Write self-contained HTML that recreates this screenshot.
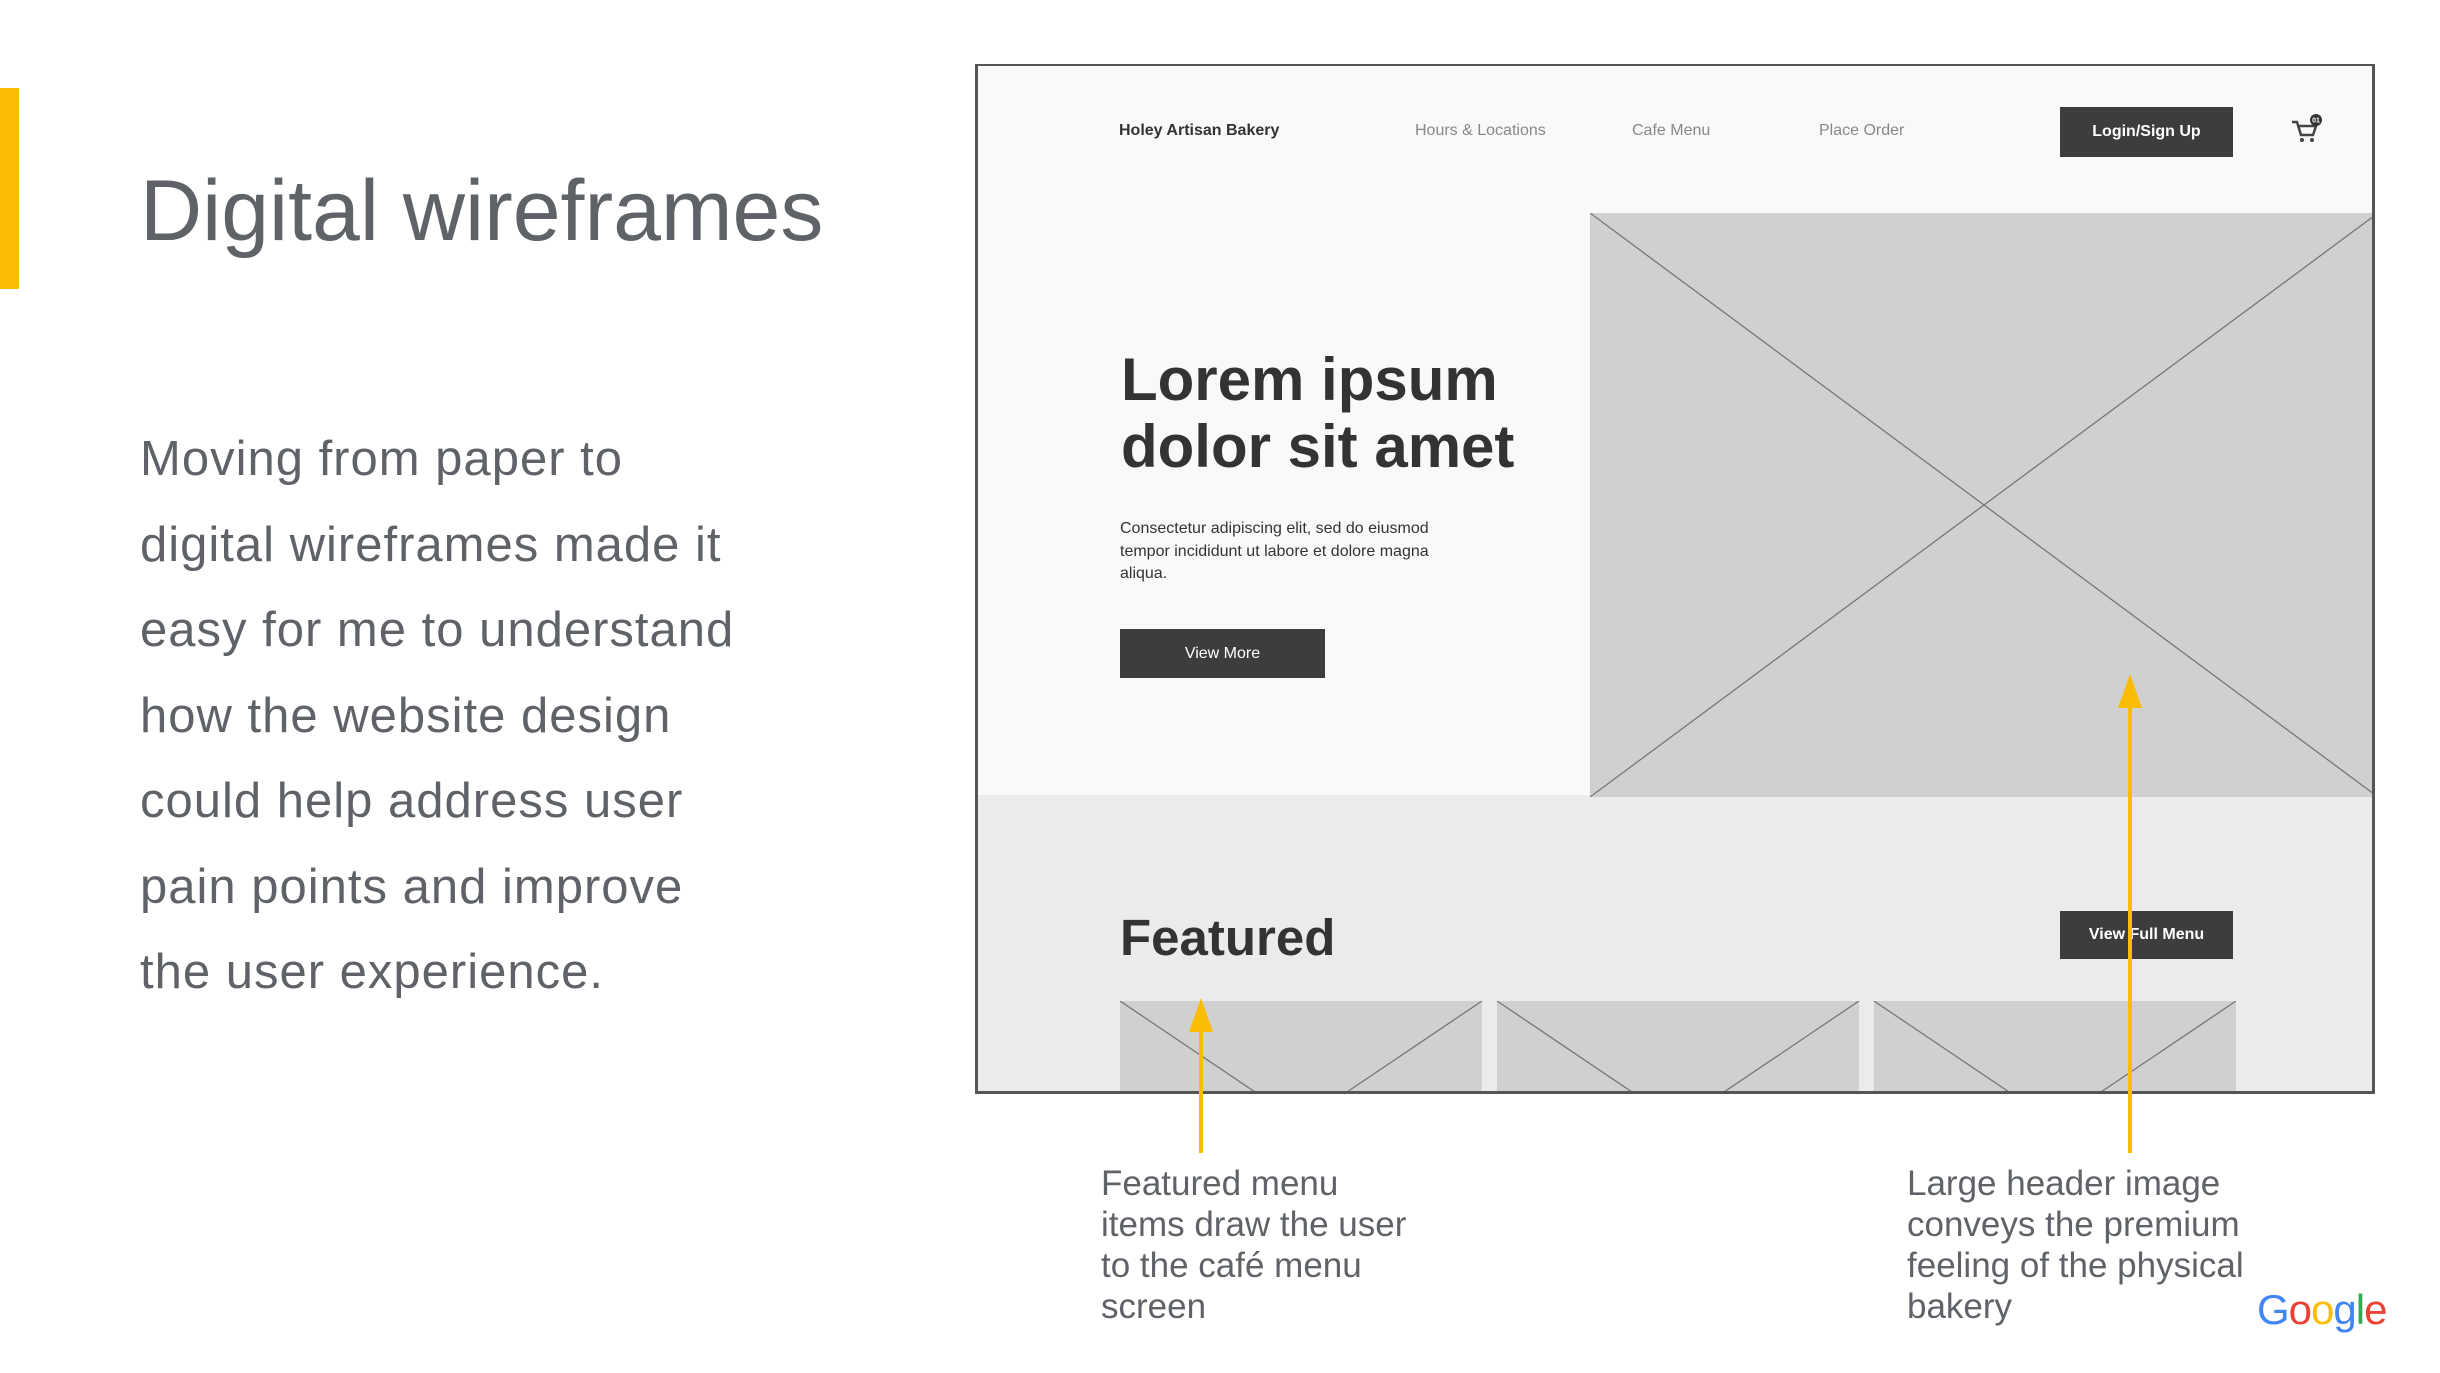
<!DOCTYPE html>
<html><head><meta charset="utf-8"><style>
*{margin:0;padding:0;box-sizing:border-box}
body{width:2440px;height:1373px;background:#fff;position:relative;overflow:hidden;font-family:"Liberation Sans",sans-serif}
.a{position:absolute;white-space:nowrap}
.bar{left:0;top:88px;width:19px;height:201px;background:#fbbc04}
.title{left:140px;top:168px;font-size:86px;color:#5f6368;line-height:1}
.body{left:140px;top:417px;font-size:49px;line-height:85.5px;color:#5f6368;letter-spacing:1px}
.frame{left:975px;top:64px;width:1400px;height:1030px;border:3px solid #555;border-top-width:2px;background:#f9f9f9;overflow:hidden}
.nav{font-size:16px;color:#888;top:56px}
.btn{background:#3d3d3d;color:#fff;font-size:16px;font-weight:bold;display:flex;align-items:center;justify-content:center}
.cap{font-size:35px;line-height:41px;color:#5f6368}
.yl{background:#fbbc04;width:4px}
</style></head><body>
<div class="a bar"></div>
<div class="a title">Digital wireframes</div>
<div class="a body">Moving from paper to<br>digital wireframes made it<br>easy for me to understand<br>how the website design<br>could help address user<br>pain points and improve<br>the user experience.</div>

<div class="a frame">
  <div class="a" style="left:0;top:729px;width:1400px;height:310px;background:#ebebeb"></div>
  <div class="a nav" style="left:141px;color:#333;font-weight:bold">Holey Artisan Bakery</div>
  <div class="a nav" style="left:437px">Hours &amp; Locations</div>
  <div class="a nav" style="left:654px">Cafe Menu</div>
  <div class="a nav" style="left:841px">Place Order</div>
  <div class="a btn" style="left:1082px;top:41px;width:173px;height:50px">Login/Sign Up</div>
  <svg class="a" style="left:1310px;top:46px" width="36" height="36" viewBox="0 0 36 36"><path d="M4 10h5l4 13h12l3-9H11" fill="none" stroke="#444" stroke-width="2.5"/><circle cx="14" cy="28" r="2" fill="#444"/><circle cx="24" cy="28" r="2" fill="#444"/><circle cx="28" cy="8" r="6" fill="#333"/><text x="28" y="10.5" font-size="7" fill="#fff" text-anchor="middle" font-family="Liberation Sans" font-weight="bold">01</text></svg>
  <svg class="a" style="left:612px;top:147px" width="788" height="584"><rect width="788" height="584" fill="#d0d0d0"/><path d="M0 0L788 584M788 0L0 584" stroke="#777" stroke-width="1.3"/></svg>
  <div class="a" style="left:143px;top:280px;font-size:60px;font-weight:bold;color:#333;line-height:67px">Lorem ipsum<br>dolor sit amet</div>
  <div class="a" style="left:142px;top:452px;font-size:16px;line-height:22.5px;color:#333">Consectetur adipiscing elit, sed do eiusmod<br>tempor incididunt ut labore et dolore magna<br>aliqua.</div>
  <div class="a btn" style="left:142px;top:563px;width:205px;height:49px;font-weight:normal">View More</div>
  <div class="a" style="left:142px;top:842px;font-size:51px;font-weight:bold;color:#333">Featured</div>
  <div class="a btn" style="left:1082px;top:845px;width:173px;height:48px">View Full Menu</div>
  <svg class="a" style="left:142px;top:935px" width="1116" height="100"><g fill="#d0d0d0"><rect x="0" width="362" height="100"/><rect x="377" width="362" height="100"/><rect x="754" width="362" height="100"/></g><g stroke="#777" stroke-width="1.3" fill="none"><path d="M0 0L135 91M362 0L227 91M377 0L512 91M739 0L604 91M754 0L889 91M1116 0L981 91"/></g></svg>
</div>

<div class="a yl" style="left:1199px;top:1022px;height:131px"></div>
<svg class="a" style="left:1189px;top:998px" width="24" height="34"><path d="M12 0L24 34H0Z" fill="#fbbc04"/></svg>
<div class="a yl" style="left:2128px;top:697px;height:456px"></div>
<svg class="a" style="left:2118px;top:674px" width="24" height="34"><path d="M12 0L24 34H0Z" fill="#fbbc04"/></svg>

<div class="a cap" style="left:1101px;top:1163px">Featured menu<br>items draw the user<br>to the café menu<br>screen</div>
<div class="a cap" style="left:1907px;top:1163px">Large header image<br>conveys the premium<br>feeling of the physical<br>bakery</div>
<div class="a" style="left:2257px;top:1286px;font-size:42px;letter-spacing:-1px"><span style="color:#4285f4">G</span><span style="color:#ea4335">o</span><span style="color:#fbbc05">o</span><span style="color:#4285f4">g</span><span style="color:#34a853">l</span><span style="color:#ea4335">e</span></div>
</body></html>
